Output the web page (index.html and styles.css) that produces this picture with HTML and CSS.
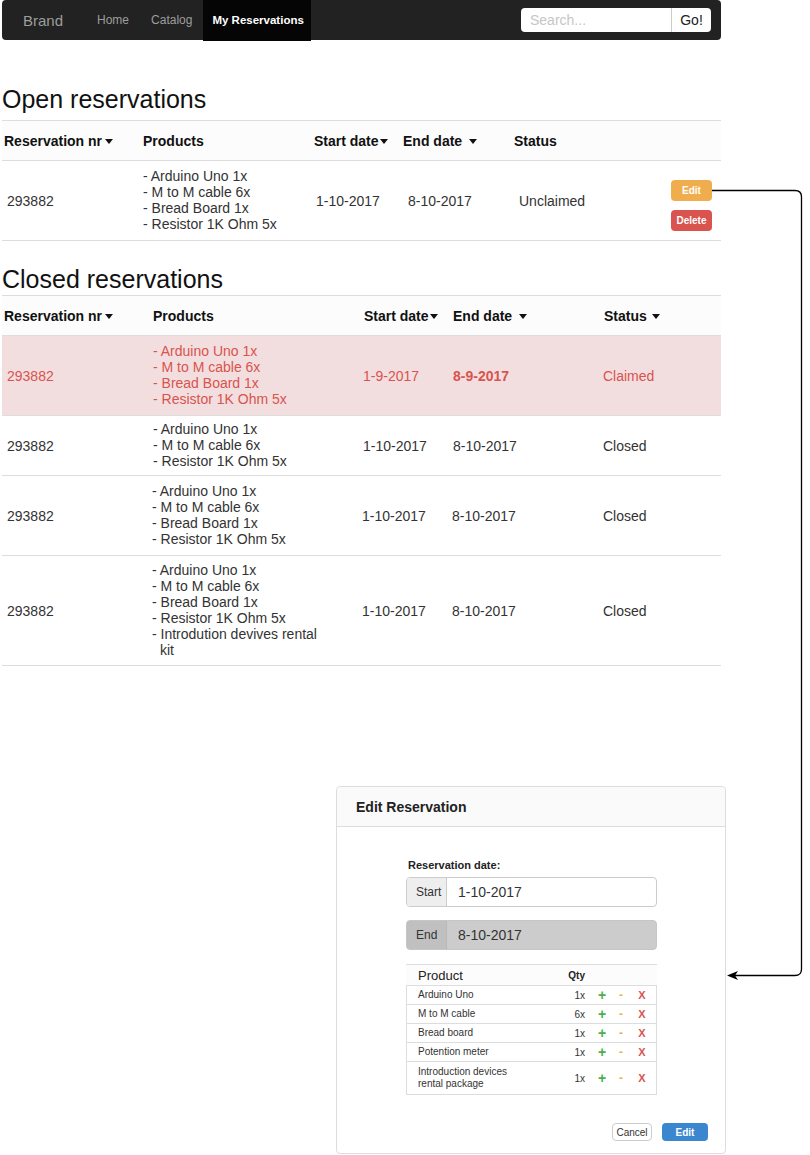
FILE: index.html
```html
<!DOCTYPE html>
<html lang="en">
<head>
<meta charset="utf-8">
<title>My Reservations</title>
<link rel="stylesheet" href="styles.css">
</head>
<body>
<div class="page">
  <nav class="navbar">
    <a class="brand" href="#">Brand</a>
    <ul class="nav-links">
      <li><a href="#">Home</a></li>
      <li><a href="#">Catalog</a></li>
      <li class="active"><a href="#">My Reservations</a></li>
    </ul>
    <form class="search">
      <input type="text" placeholder="Search...">
      <button type="button">Go!</button>
    </form>
  </nav>

  <h2 class="section-title open-title">Open reservations</h2>
  <table class="res-table open">
    <colgroup>
      <col class="c-nr"><col class="c-prod"><col class="c-start"><col class="c-end"><col class="c-status"><col class="c-act">
    </colgroup>
    <thead>
      <tr>
        <th>Reservation nr<span class="caret"></span></th>
        <th>Products</th>
        <th>Start date<span class="caret tight"></span></th>
        <th>End date <span class="caret"></span></th>
        <th>Status</th>
        <th></th>
      </tr>
    </thead>
    <tbody>
      <tr>
        <td>293882</td>
        <td>
          <ul class="items">
            <li>- Arduino Uno 1x</li>
            <li>- M to M cable 6x</li>
            <li>- Bread Board 1x</li>
            <li>- Resistor 1K Ohm 5x</li>
          </ul>
        </td>
        <td>1-10-2017</td>
        <td>8-10-2017</td>
        <td>Unclaimed</td>
        <td>
          <div class="actions">
            <button class="btn-xs btn-warning" type="button">Edit</button>
            <button class="btn-xs btn-danger" type="button">Delete</button>
          </div>
        </td>
      </tr>
    </tbody>
  </table>

  <h2 class="section-title closed-title">Closed reservations</h2>
  <table class="res-table closed">
    <colgroup>
      <col class="c-nr"><col class="c-prod"><col class="c-start"><col class="c-end"><col class="c-status">
    </colgroup>
    <thead>
      <tr>
        <th>Reservation nr<span class="caret"></span></th>
        <th>Products</th>
        <th>Start date<span class="caret tight"></span></th>
        <th>End date <span class="caret"></span></th>
        <th>Status <span class="caret near"></span></th>
      </tr>
    </thead>
    <tbody>
      <tr class="danger">
        <td>293882</td>
        <td>
          <ul class="items">
            <li>- Arduino Uno 1x</li>
            <li>- M to M cable 6x</li>
            <li>- Bread Board 1x</li>
            <li>- Resistor 1K Ohm 5x</li>
          </ul>
        </td>
        <td>1-9-2017</td>
        <td class="strong">8-9-2017</td>
        <td>Claimed</td>
      </tr>
      <tr class="row-3">
        <td>293882</td>
        <td>
          <ul class="items">
            <li>- Arduino Uno 1x</li>
            <li>- M to M cable 6x</li>
            <li>- Resistor 1K Ohm 5x</li>
          </ul>
        </td>
        <td>1-10-2017</td>
        <td>8-10-2017</td>
        <td>Closed</td>
      </tr>
      <tr class="shift">
        <td>293882</td>
        <td>
          <ul class="items">
            <li>- Arduino Uno 1x</li>
            <li>- M to M cable 6x</li>
            <li>- Bread Board 1x</li>
            <li>- Resistor 1K Ohm 5x</li>
          </ul>
        </td>
        <td>1-10-2017</td>
        <td>8-10-2017</td>
        <td>Closed</td>
      </tr>
      <tr class="row-6 shift">
        <td>293882</td>
        <td>
          <ul class="items">
            <li>- Arduino Uno 1x</li>
            <li>- M to M cable 6x</li>
            <li>- Bread Board 1x</li>
            <li>- Resistor 1K Ohm 5x</li>
            <li>- Introdution devives rental kit</li>
          </ul>
        </td>
        <td>1-10-2017</td>
        <td>8-10-2017</td>
        <td>Closed</td>
      </tr>
    </tbody>
  </table>

  <section class="modal">
    <header class="modal-header">
      <h3>Edit Reservation</h3>
    </header>
    <div class="modal-body">
      <label class="field-label">Reservation date:</label>
      <div class="input-group">
        <span class="addon">Start</span>
        <span class="value">1-10-2017</span>
      </div>
      <div class="input-group disabled">
        <span class="addon">End</span>
        <span class="value">8-10-2017</span>
      </div>
      <table class="product-table">
        <colgroup>
          <col class="p-name"><col class="p-qty"><col class="p-plus"><col class="p-minus"><col class="p-del">
        </colgroup>
        <thead>
          <tr>
            <th class="name">Product</th>
            <th class="qty">Qty</th>
            <th></th>
            <th></th>
            <th></th>
          </tr>
        </thead>
        <tbody>
          <tr>
            <td class="name">Arduino Uno</td>
            <td class="qty">1x</td>
            <td class="plus">+</td>
            <td class="minus">-</td>
            <td class="del">X</td>
          </tr>
          <tr>
            <td class="name">M to M cable</td>
            <td class="qty">6x</td>
            <td class="plus">+</td>
            <td class="minus">-</td>
            <td class="del">X</td>
          </tr>
          <tr>
            <td class="name">Bread board</td>
            <td class="qty">1x</td>
            <td class="plus">+</td>
            <td class="minus">-</td>
            <td class="del">X</td>
          </tr>
          <tr>
            <td class="name">Potention meter</td>
            <td class="qty">1x</td>
            <td class="plus">+</td>
            <td class="minus">-</td>
            <td class="del">X</td>
          </tr>
          <tr class="tall">
            <td class="name">Introduction devices rental package</td>
            <td class="qty">1x</td>
            <td class="plus">+</td>
            <td class="minus">-</td>
            <td class="del">X</td>
          </tr>
        </tbody>
      </table>
    </div>
    <footer class="modal-footer">
      <button class="btn-cancel" type="button">Cancel</button>
      <button class="btn-primary" type="button">Edit</button>
    </footer>
  </section>
</div>

<svg class="connector" width="810" height="1155" viewBox="0 0 810 1155" aria-hidden="true">
  <path d="M712 190.5 H795 Q801.5 190.5 801.5 197 V969 Q801.5 975.5 795 975.5 H735" fill="none" stroke="#000" stroke-width="1.3"/>
  <polygon points="727,975.5 738,971 735,975.5 738,980" fill="#000"/>
</svg>
</body>
</html>
```

FILE: styles.css
```css
* {
  box-sizing: border-box;
}

body {
  margin: 0;
  position: relative;
  width: 810px;
  min-height: 1155px;
  font-family: "Liberation Sans", Arial, sans-serif;
  color: #333;
  background: #fff;
}

.page {
  width: 721px;
  padding-left: 2px;
}

/* Navbar */
.navbar {
  display: flex;
  align-items: center;
  height: 40px;
  background: #222;
  border-radius: 4px;
}

.brand {
  margin-left: 21px;
  font-size: 15px;
  line-height: 41px;
  color: #9d9d9d;
  text-decoration: none;
}

.nav-links {
  display: flex;
  list-style: none;
  margin: 0 0 0 23px;
  padding: 0;
  height: 40px;
}

.nav-links li + li {
  margin-left: 1px;
}

.nav-links a {
  display: block;
  padding: 0 10px 0 11px;
  line-height: 41px;
  font-size: 12px;
  color: #9d9d9d;
  text-decoration: none;
}

.nav-links .active a {
  background: #050505;
  color: #fff;
  font-weight: bold;
  font-size: 11.5px;
  padding: 0 7px 0 9px;
}

.search {
  display: flex;
  margin: 0 10px 0 auto;
  height: 24px;
}

.search input {
  width: 150px;
  height: 24px;
  border: none;
  border-radius: 4px 0 0 4px;
  padding: 0 9px;
  font-family: "Liberation Sans", Arial, sans-serif;
  font-size: 14px;
  color: #333;
  background: #fff;
  outline: none;
}

.search input::placeholder {
  color: #c6c6c6;
}

.search button {
  width: 40px;
  height: 24px;
  border: none;
  border-left: 1px solid #ccc;
  border-radius: 0 4px 4px 0;
  background: #fff;
  padding: 0;
  font-family: "Liberation Sans", Arial, sans-serif;
  font-size: 14px;
  color: #222;
}

/* Section titles */
.section-title {
  font-size: 25px;
  font-weight: normal;
  line-height: 30px;
  color: #111;
}

.open-title {
  margin: 44px 0 6px;
}

.closed-title {
  margin: 23px 0 1px;
}

/* Reservation tables */
.res-table {
  width: 719px;
  table-layout: fixed;
  border-collapse: separate;
  border-spacing: 0;
  font-size: 14px;
}

.res-table th {
  height: 41px;
  padding: 0 0 0 2px;
  text-align: left;
  vertical-align: middle;
  font-weight: bold;
  color: #111;
  white-space: nowrap;
  background: #fcfcfc;
  border-top: 1px solid #ddd;
  border-bottom: 1px solid #ddd;
}

.res-table td {
  height: 80px;
  padding: 0 0 0 5px;
  vertical-align: middle;
  line-height: 16px;
  border-bottom: 1px solid #ddd;
}

.res-table .row-3 td {
  height: 60px;
}

.res-table .row-6 td {
  height: 110px;
}

.caret {
  display: inline-block;
  width: 0;
  height: 0;
  margin-left: 3px;
  vertical-align: middle;
  border-top: 5px solid #111;
  border-left: 4px solid transparent;
  border-right: 4px solid transparent;
}

.caret.tight {
  margin-left: 1px;
}

.caret.near {
  margin-left: 1px;
}

.open .c-nr { width: 139px; }
.open .c-prod { width: 171px; }
.open .c-start { width: 89px; }
.open .c-end { width: 111px; }
.open .c-status { width: 150px; }
.open .c-act { width: 59px; }

.open td:nth-child(2) { padding-left: 2px; }
.open td:nth-child(3) { padding-left: 4px; }
.open td:nth-child(4) { padding-left: 7px; }
.open td:nth-child(5) { padding-left: 7px; }
.open td:nth-child(6) { padding-left: 9px; }

.closed .c-nr { width: 149px; }
.closed .c-prod { width: 211px; }
.closed .c-start { width: 89px; }
.closed .c-end { width: 151px; }
.closed .c-status { width: 119px; }

.closed td:nth-child(2) { padding-left: 2px; }
.closed td:nth-child(3) { padding-left: 1px; }
.closed td:nth-child(4) { padding-left: 2px; }
.closed td:nth-child(5) { padding-left: 1px; }

.closed .shift td:nth-child(n+2) { padding-left: 1px; }
.closed .shift td:nth-child(3) { padding-left: 0; }

.res-table .danger td {
  background: #f2dede;
  color: #d9534f;
}

.res-table .strong {
  font-weight: bold;
}

.items {
  list-style: none;
  margin: -2px 0 0;
  padding: 0;
  max-width: 178px;
}

.items li {
  padding-left: 8px;
  text-indent: -8px;
}

.actions {
  display: flex;
  flex-direction: column;
  gap: 9px;
  margin-top: 10px;
}

.btn-xs {
  display: block;
  width: 41px;
  height: 21px;
  padding: 0;
  border: none;
  border-radius: 4px;
  font-family: "Liberation Sans", Arial, sans-serif;
  font-size: 10px;
  font-weight: bold;
  color: #fff;
}

.btn-warning {
  background: #f0ad4e;
}

.btn-danger {
  background: #d9534f;
}

/* Modal */
.modal {
  display: flex;
  flex-direction: column;
  width: 390px;
  height: 368px;
  margin: 120px 0 0 334px;
  border: 1px solid #ddd;
  border-radius: 4px;
  background: #fff;
}

.modal-header {
  display: flex;
  align-items: center;
  height: 40px;
  padding-left: 19px;
  background: #fafafa;
  border-bottom: 1px solid #ddd;
  border-radius: 4px 4px 0 0;
}

.modal-header h3 {
  margin: 0;
  font-size: 14px;
  font-weight: bold;
  color: #222;
}

.modal-body {
  padding: 31px 68px 0 69px;
}

.field-label {
  display: block;
  margin-bottom: 5px;
  padding-left: 2px;
  font-size: 11px;
  font-weight: bold;
  line-height: 14px;
  color: #222;
}

.input-group {
  display: flex;
  height: 30px;
  margin-bottom: 13px;
  border: 1px solid #ccc;
  border-radius: 4px;
  overflow: hidden;
  background: #fff;
}

.input-group.disabled {
  margin-bottom: 14px;
  background: #cccccc;
  border-color: #c6c6c6;
}

.addon {
  display: flex;
  align-items: center;
  width: 40px;
  padding-left: 9px;
  font-size: 12px;
  color: #333;
  background: #eee;
  border-right: 1px solid #ccc;
}

.disabled .addon {
  background: #c0c0c0;
  border-right-color: #b8b8b8;
}

.value {
  display: flex;
  align-items: center;
  padding-left: 11px;
  font-size: 14px;
  color: #333;
}

/* Product table */
.product-table {
  width: 251px;
  table-layout: fixed;
  border-collapse: separate;
  border-spacing: 0;
  font-size: 10px;
  color: #333;
}

.p-name { width: 154px; }
.p-qty { width: 30px; }
.p-plus { width: 24px; }
.p-minus { width: 14px; }
.p-del { width: 29px; }

.product-table th {
  height: 21px;
  padding: 0;
  background: #fcfcfc;
  border-top: 1px solid #ddd;
  vertical-align: middle;
}

.product-table th.name {
  padding-left: 12px;
  text-align: left;
  font-size: 13px;
  font-weight: normal;
  color: #222;
}

.product-table th.qty {
  padding-right: 5px;
  text-align: right;
  font-size: 10px;
  font-weight: bold;
  color: #222;
}

.product-table td {
  height: 19px;
  padding: 0;
  vertical-align: middle;
  border-bottom: 1px solid #ddd;
}

.product-table tbody tr:first-child td {
  height: 20px;
  border-top: 1px solid #ddd;
}

.product-table td:first-child {
  border-left: 1px solid #ddd;
}

.product-table td:last-child {
  border-right: 1px solid #ddd;
}

.product-table .tall td {
  height: 33px;
}

.product-table td.name {
  padding: 0 40px 0 11px;
  line-height: 12px;
}

.product-table td.qty {
  padding-right: 5px;
  text-align: right;
}

.product-table .plus,
.product-table .minus,
.product-table .del {
  text-align: center;
  font-weight: bold;
}

.product-table .plus {
  font-size: 14px;
  color: #4cae4c;
}

.product-table .minus {
  font-size: 12px;
  color: #f0ad4e;
}

.product-table .del {
  font-size: 11px;
  color: #d9534f;
}

/* Modal footer */
.modal-footer {
  display: flex;
  justify-content: flex-end;
  align-items: center;
  gap: 10px;
  margin-top: auto;
  padding: 0 17px 12px 0;
}

.btn-cancel,
.btn-primary {
  height: 18px;
  padding: 0;
  border-radius: 4px;
  font-family: "Liberation Sans", Arial, sans-serif;
  font-size: 10px;
}

.btn-cancel {
  width: 40px;
  background: #fff;
  border: 1px solid #ccc;
  color: #333;
}

.btn-primary {
  width: 46px;
  background: #3a87cf;
  border: none;
  color: #fff;
  font-weight: bold;
}

/* Connector arrow */
.connector {
  position: absolute;
  left: 0;
  top: 0;
  pointer-events: none;
}
```
